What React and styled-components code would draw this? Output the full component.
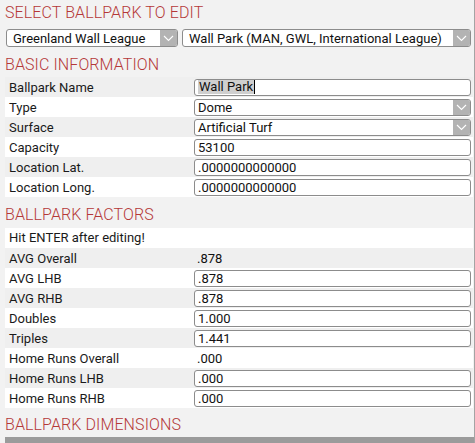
import React from "react";
import styled, { createGlobalStyle } from "styled-components";

const GlobalStyle = createGlobalStyle`
  html, body {
    margin: 0;
    padding: 0;
    background: #f2f2f2;
    font-family: Roboto, "Liberation Sans", Arial, sans-serif;
  }
`;

const Page = styled.div`
  box-sizing: border-box;
  width: 475px;
  height: 443px;
  overflow: hidden;
  padding-left: 5px;
  background: #f2f2f2;
  border-right: 1px solid #a4a4a4;
  display: flex;
  flex-direction: column;
`;

const Heading = styled.h2`
  margin: ${(props) => props.$top || 0}px 0 ${(props) => props.$bottom || 0}px;
  font-size: 16px;
  line-height: 20px;
  font-weight: 300;
  color: #b53838;
  letter-spacing: 0.1px;
`;

const SelectRow = styled.div`
  display: flex;
  gap: 4px;
  padding-left: 1px;
  height: 18px;
`;

const SelectBox = styled.div`
  box-sizing: border-box;
  width: ${(props) => props.$width}px;
  height: ${(props) => props.$height || 18}px;
  display: flex;
  align-items: center;
  background: #fff;
  border: 1px solid #8c8c8c;
  border-radius: 3px;
  overflow: hidden;
  font-size: 13px;
  color: #111;
`;

const SelectText = styled.span`
  flex: 1;
  padding-left: ${(props) => props.$pad || 6}px;
  white-space: nowrap;
`;

const ArrowBox = styled.span`
  width: 17px;
  align-self: stretch;
  background: #b3b3b3;
  display: flex;
  align-items: center;
  justify-content: center;
`;

const Table = styled.div`
  display: flex;
  flex-direction: column;
  width: 468px;
`;

const Row = styled.div`
  display: grid;
  grid-template-columns: 189px 1fr;
  align-items: center;
  height: 20px;
  background: ${(props) => (props.$shade ? "#efefef" : "#fff")};
`;

const Note = styled.div`
  height: 20px;
  line-height: 20px;
  padding-left: 4px;
  background: #fff;
  font-size: 13px;
  color: #1a1a1a;
  width: 464px;
`;

const Label = styled.span`
  padding-left: 4px;
  font-size: 13px;
  color: #1a1a1a;
`;

const Value = styled.span`
  padding-left: 3px;
  font-size: 13px;
  color: #111;
`;

const Field = styled.div`
  box-sizing: border-box;
  width: 277px;
  height: 17px;
  display: flex;
  align-items: center;
  padding-left: 3px;
  background: #fff;
  border: 1px solid #8c8c8c;
  border-radius: 3px;
  font-size: 13px;
  color: #111;
`;

const Selected = styled.span`
  background: #cfcfcf;
  padding: 0 1px;
  border-right: 1px solid #000;
  line-height: 14px;
`;

const Bar = styled.div`
  margin-top: 2px;
  height: 6px;
  background: #9b9b9b;
`;

const Chevron = () => (
  <svg width="11" height="7" viewBox="0 0 11 7">
    <path d="M1 1 L5.5 5.5 L10 1" fill="none" stroke="#fff" strokeWidth="1.1" />
  </svg>
);

const Dropdown = ({ width, height, pad, children }) => (
  <SelectBox $width={width} $height={height}>
    <SelectText $pad={pad}>{children}</SelectText>
    <ArrowBox>
      <Chevron />
    </ArrowBox>
  </SelectBox>
);

const basic = [
  { label: "Ballpark Name", kind: "name", value: "Wall Park" },
  { label: "Type", kind: "select", value: "Dome" },
  { label: "Surface", kind: "select", value: "Artificial Turf" },
  { label: "Capacity", kind: "input", value: "53100" },
  { label: "Location Lat.", kind: "input", value: ".0000000000000" },
  { label: "Location Long.", kind: "input", value: ".0000000000000" },
];

const factors = [
  { label: "AVG Overall", kind: "text", value: ".878" },
  { label: "AVG LHB", kind: "input", value: ".878" },
  { label: "AVG RHB", kind: "input", value: ".878" },
  { label: "Doubles", kind: "input", value: "1.000" },
  { label: "Triples", kind: "input", value: "1.441" },
  { label: "Home Runs Overall", kind: "text", value: ".000" },
  { label: "Home Runs LHB", kind: "input", value: ".000" },
  { label: "Home Runs RHB", kind: "input", value: ".000" },
];

const renderValue = (item) => {
  if (item.kind === "name")
    return (
      <Field>
        <Selected>{item.value}</Selected>
      </Field>
    );
  if (item.kind === "select")
    return (
      <Dropdown width={277} height={17} pad={3}>
        {item.value}
      </Dropdown>
    );
  if (item.kind === "text") return <Value>{item.value}</Value>;
  return <Field>{item.value}</Field>;
};

const Rows = ({ items }) =>
  items.map((item, i) => (
    <Row key={item.label} $shade={i % 2 === 0}>
      <Label>{item.label}</Label>
      {renderValue(item)}
    </Row>
  ));

export default function App() {
  return (
    <>
      <GlobalStyle />
      <Page>
        <Heading $top={3} $bottom={6}>SELECT BALLPARK TO EDIT</Heading>
        <SelectRow>
          <Dropdown width={172}>Greenland Wall League</Dropdown>
          <Dropdown width={289}>Wall Park (MAN, GWL, International League)</Dropdown>
        </SelectRow>
        <Heading $top={8} $bottom={2}>BASIC INFORMATION</Heading>
        <Table>
          <Rows items={basic} />
        </Table>
        <Heading $top={8} $bottom={3}>BALLPARK FACTORS</Heading>
        <Note>Hit ENTER after editing!</Note>
        <Table>
          <Rows items={factors} />
        </Table>
        <Heading $top={7} $bottom={0}>BALLPARK DIMENSIONS</Heading>
        <Bar />
      </Page>
    </>
  );
}
